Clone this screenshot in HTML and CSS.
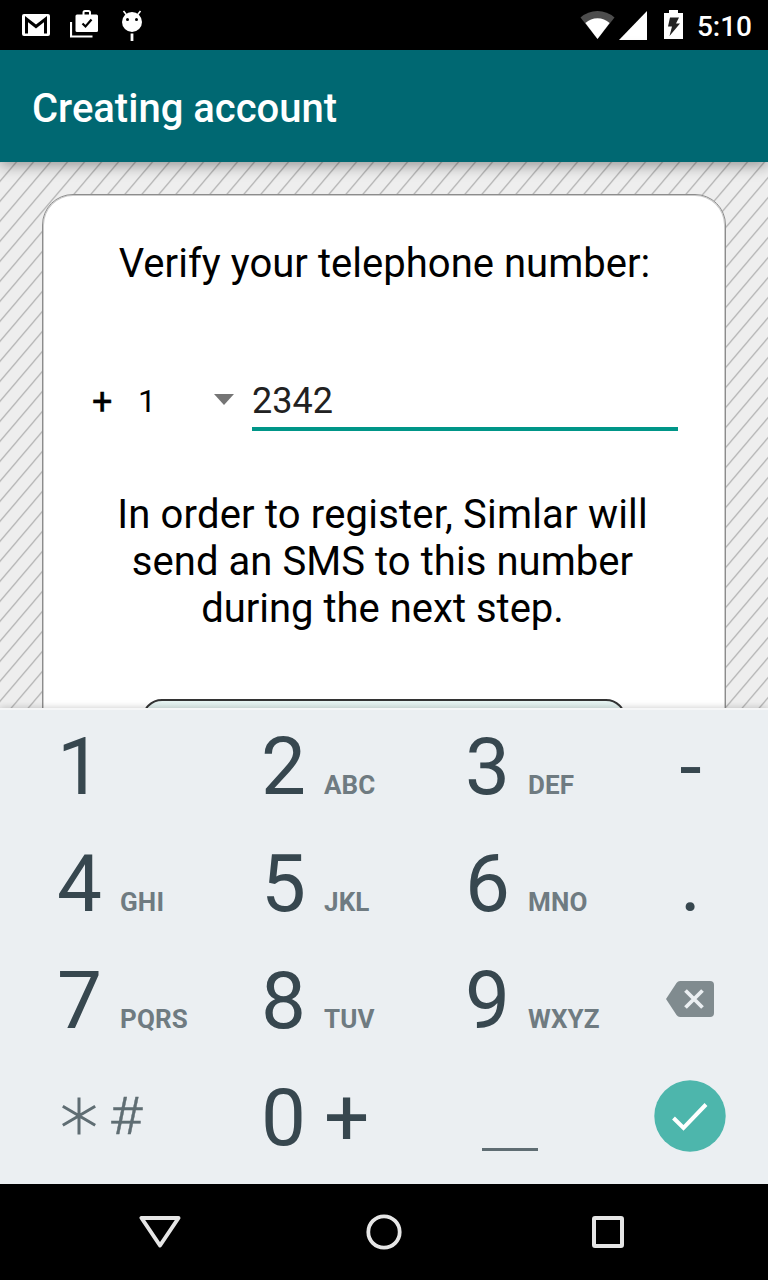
FILE: index.html
```
<!DOCTYPE html>
<html lang="en">
<head>
<meta charset="utf-8">
<title>Creating account</title>
<link rel="stylesheet" href="styles.css">
</head>
<body>
<div class="screen">
  <header class="status">
    <div class="status-left">
      <svg width="28" height="24" viewBox="0 0 28 24"><rect x="0" y="1" width="28" height="22" rx="2" fill="#fff"/><path d="M4.500 20.500V6l9.500 7.500L23.500 6v14.500" fill="none" stroke="#000" stroke-width="3"/></svg>
      <svg width="28" height="28" viewBox="0 0 28 28"><path d="M1 12v14.500h21.500" fill="none" stroke="#fff" stroke-width="2.200"/><path d="M13.500 5V2.500Q13.500 1 15 1h3.500Q20 1 20 2.500V5" fill="none" stroke="#fff" stroke-width="2"/><rect x="5.500" y="4.500" width="22.500" height="17.500" rx="1.500" fill="#fff"/><path d="M12.500 13.500l3 3 6-7" fill="none" stroke="#000" stroke-width="2.200"/></svg>
      <svg width="22" height="32" viewBox="0 0 22 32"><circle cx="11" cy="13" r="10" fill="#fff"/><path d="M2.500 2l3.500 4.500M19.500 2l-3.500 4.500" stroke="#fff" stroke-width="1.600"/><path d="M11 24.500v7.500" stroke="#fff" stroke-width="2.800"/><circle cx="6.500" cy="10.500" r="1.500"/><circle cx="15.500" cy="10.500" r="1.500"/></svg>
    </div>
    <div class="status-right">
      <svg class="wifi" width="35" height="30" viewBox="0 0 36 30" preserveAspectRatio="none"><path d="M18 29L.5 7.500Q8 1 18 1t17.500 6.500z" fill="#4d4d4d"/><path d="M18 29L5.500 13Q11 8.300 18 8.300T30.500 13z" fill="#fff"/></svg>
      <svg class="cell" width="28" height="29" viewBox="0 0 29 29" preserveAspectRatio="none"><path d="M0 29L29 0v29z" fill="#fff"/></svg>
      <svg class="battery" width="19" height="29" viewBox="0 0 19 29"><path d="M0 3h5V0h9v3h5v26H0z" fill="#fff"/><path d="M6 7.500h9l-3 6h4L5.500 26 8 16.500H4z" fill="#222"/></svg>
      <span class="clock">5:10</span>
    </div>
  </header>
  <div class="appbar"><h1 class="title">Creating account</h1></div>
  <main class="content">
    <svg class="hatch" width="768" height="546"><defs><pattern id="hatch" width="17" height="20" patternUnits="userSpaceOnUse" patternTransform="translate(0 -.7)"><path d="M-1.700 22L18.700 -2M-1.700 2L1.700 -2M15.300 22L18.700 18" stroke="#b0b0b0" stroke-width="1.200"/></pattern></defs><rect width="768" height="546" fill="url(#hatch)"/></svg>
    <section class="card">
      <p class="heading">Verify your telephone number:</p>
      <div class="phone">
        <span class="plus">+</span>
        <span class="country">1</span>
        <svg class="caret" width="20" height="11" viewBox="0 0 20 11"><path d="M0 0h20L10 11z" fill="#757575"/></svg>
        <div class="number">2342</div>
      </div>
      <p class="info"><span class="wide">In order to register, Simlar will</span><br><span class="roomy">send an SMS to this number</span><br>during the next step.</p>
      <div class="next"></div>
    </section>
  </main>
  <section class="keyboard">
    <div class="key"><span class="digit">1</span></div>
    <div class="key"><span class="digit">2</span><span class="letters">ABC</span></div>
    <div class="key"><span class="digit">3</span><span class="letters">DEF</span></div>
    <div class="key side"><span class="mark">-</span></div>
    <div class="key"><span class="digit">4</span><span class="letters">GHI</span></div>
    <div class="key"><span class="digit">5</span><span class="letters">JKL</span></div>
    <div class="key"><span class="digit">6</span><span class="letters">MNO</span></div>
    <div class="key side"><span class="mark">.</span></div>
    <div class="key"><span class="digit">7</span><span class="letters">PQRS</span></div>
    <div class="key"><span class="digit">8</span><span class="letters">TUV</span></div>
    <div class="key"><span class="digit">9</span><span class="letters">WXYZ</span></div>
    <div class="key side icon"><svg width="48" height="36" viewBox="0 0 48 36"><path d="M0 18L10.500 2Q12 0 14 0h30q4 0 4 4v28q0 4-4 4H14q-2 0-3.500-2z" fill="#808b8f"/><path d="M19.500 9.500l17 17m0-17l-17 17" stroke="#ebeff2" stroke-width="3.800"/></svg></div>
    <div class="key symbols"><svg width="34" height="38" viewBox="0 0 34 38"><path d="M17 .5v37M.8 9.300l32.400 19M33.200 9.300l-32.400 19" stroke="#5f6d73" stroke-width="3"/></svg><span class="hash">#</span></div>
    <div class="key"><span class="digit">0</span><span class="zero-plus">+</span></div>
    <div class="key space"><span class="bar"></span></div>
    <div class="key side icon"><svg width="72" height="72" viewBox="0 0 72 72"><circle cx="36" cy="36" r="35.700" fill="#4db6ac"/><path d="M19.500 38l10 10L52 24.500" fill="none" stroke="#fff" stroke-width="4"/></svg></div>
  </section>
  <nav class="nav">
    <svg width="42" height="36" viewBox="0 0 42 36"><path d="M2.500 4h37L21 31.500z" fill="none" stroke="#e6e6e6" stroke-width="4" stroke-linejoin="round"/></svg>
    <svg width="36" height="36" viewBox="0 0 36 36"><circle cx="18" cy="18" r="15.700" fill="none" stroke="#e6e6e6" stroke-width="3.800"/></svg>
    <svg width="32" height="32" viewBox="0 0 32 32"><rect x="2" y="2" width="28" height="28" rx="1" fill="none" stroke="#e6e6e6" stroke-width="4"/></svg>
  </nav>
</div>
</body>
</html>
```
FILE: styles.css
```
* { box-sizing: border-box; }
body { margin: 0; font-family: Roboto, sans-serif; color: #000; }
h1, p { margin: 0; font-weight: 400; }
svg { display: block; flex: none; }
.screen { width: 768px; height: 1280px; display: flex; flex-direction: column; overflow: hidden; }
.status { height: 50px; flex: none; background: #000; display: flex; justify-content: space-between; }
.status-left { display: flex; align-items: center; gap: 20px; padding-left: 22px; }
.status-left svg:nth-child(2) { margin-top: -2px; }
.status-left svg:nth-child(3) { margin-left: 3px; }
.status-right { display: flex; align-items: flex-start; padding: 10px 16px 0 0; }
.cell { margin: 1px 0 0 4px; }
.battery { margin: 0 0 0 17px; }
.clock { margin-left: 14px; color: #fff; font-size: 28px; font-weight: 500; line-height: 33px; }
.appbar { height: 112px; flex: none; background: #006872; display: flex; align-items: center; padding: 6px 32px 0; position: relative; z-index: 1; box-shadow: 0 3px 14px rgba(0, 0, 0, .4); }
.title { color: #fff; font-size: 40px; font-weight: 500; line-height: 48px; }
.content { height: 546px; flex: none; background: #eee; position: relative; overflow: hidden; padding: 32px 42px 0; }
.hatch { position: absolute; left: 0; top: 0; }
.card { position: relative; height: 600px; background: #fff; border: 1px solid #8c8c8c; border-radius: 31px; box-shadow: inset 0 0 0 1px #ccc; padding-top: 45px; }
.heading { font-size: 40px; line-height: 47px; text-align: center; letter-spacing: .03px; padding-left: 1px; }
.phone { height: 84px; margin-top: 65px; padding: 0 47px 0 48px; display: flex; }
.plus { width: 48px; padding-left: 1px; font-size: 36px; line-height: 101px; -webkit-text-stroke: .4px #000; }
.country { width: 75px; font-size: 32px; line-height: 98px; margin-left: -1px; padding-right: 1px; box-sizing: content-box; }
.caret { margin-top: 42px; }
.number { margin-left: 18px; flex: 1; height: 79px; border-bottom: 4px solid #009688; font-size: 36px; line-height: 99px; color: #212121; }
.info { margin-top: 55px; font-size: 40px; line-height: 47px; text-align: center; padding-right: 3px; }
.wide { letter-spacing: .18px; }
.roomy { letter-spacing: .06px; }
.next { width: 484px; height: 96px; margin: 67px auto 0; border: 2px solid #333; border-radius: 20px; background: linear-gradient(#e6f4f2, #b0bfbd); }
.keyboard { height: 476px; flex: none; position: relative; background: #ebeff2; box-shadow: inset 0 2px #f5f6f7, 0 0 7px rgba(0, 0, 0, .22); display: grid; grid-template-columns: 204px 204px 204px 156px; grid-auto-rows: 117px; }
.key { min-height: 0; padding: 1px 0 0 57px; display: flex; align-items: baseline; line-height: 117px; color: #37474f; }
.digit { width: 63px; font-size: 80px; }
.letters { font-size: 26px; font-weight: 700; color: #6f7b81; line-height: 30px; letter-spacing: .15px; }
.side { padding: 1px 0 0 1px; justify-content: center; }
.mark { font-size: 80px; }
.icon { align-items: center; padding: 0 0 4px; }
.symbols { padding: 0 0 3px 62px; align-items: center; gap: 13px; }
.hash { font-size: 52px; font-weight: 300; color: #5f6d73; transform: scaleX(1.1); transform-origin: left; -webkit-text-stroke: .4px #5f6d73; }
.zero-plus { font-size: 80px; }
.space { padding: 0; justify-content: center; align-items: flex-start; }
.bar { width: 56px; height: 3px; margin-top: 89px; background: #5f6d73; }
.nav { height: 96px; flex: none; position: relative; background: #000; display: flex; align-items: center; padding-left: 139px; }
.nav svg:nth-child(2) { margin: 0 190px 0 185px; }
```
